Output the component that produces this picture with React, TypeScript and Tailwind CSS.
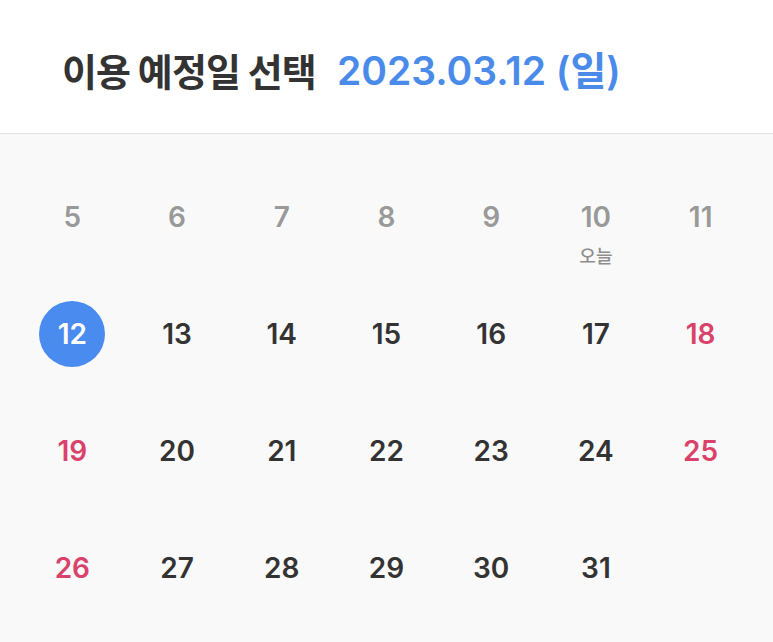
import React from "react";

type Day = { d: number | null; kind: "past" | "normal" | "red" | "selected"; today?: boolean };

const rows: Day[][] = [
  [5, 6, 7, 8, 9, 10, 11].map((d) => ({ d, kind: "past" as const, today: d === 10 })),
  [12, 13, 14, 15, 16, 17, 18].map((d) => ({
    d,
    kind: d === 12 ? ("selected" as const) : d === 18 ? ("red" as const) : ("normal" as const),
  })),
  [19, 20, 21, 22, 23, 24, 25].map((d) => ({
    d,
    kind: d === 19 || d === 25 ? ("red" as const) : ("normal" as const),
  })),
  [26, 27, 28, 29, 30, 31, null].map((d) => ({
    d,
    kind: d === 26 ? ("red" as const) : ("normal" as const),
  })),
];

const font = { fontFamily: "Inter, 'Noto Sans CJK KR', sans-serif" };
const kr = { fontFamily: "'Noto Sans CJK KR', sans-serif" };

export default function App() {
  return (
    <div className="w-[773px] h-[642px] bg-[#f9f9f9] overflow-hidden" style={font}>
      <div className="h-[134px] bg-white border-b border-[#e3e3e3] flex items-center pl-[62px] pt-[6px]">
        <span className="text-[38px] font-semibold text-[#333333] tracking-[-0.9px]" style={kr}>
          이용 예정일 선택
        </span>
        <span className="ml-[21px] text-[39px] font-semibold text-[#4a8bea] tracking-[0px]">
          2023.03.12 (<span style={kr}>일</span>)
        </span>
      </div>
      <div className="px-[20px] pt-[50px] flex flex-col">
        {rows.map((row, ri) => (
          <div key={ri} className="grid grid-cols-7 h-[117px]">
            {row.map((day, ci) => (
              <div key={ci} className="flex flex-col items-center">
                {day.d !== null && (
                  <div
                    className={
                      "w-[66px] h-[66px] rounded-full flex items-center justify-center text-[28px] font-semibold " +
                      (day.kind === "selected"
                        ? "bg-[#4a8bf0] text-white"
                        : day.kind === "past"
                        ? "text-[#999999]"
                        : day.kind === "red"
                        ? "text-[#d9436b]"
                        : "text-[#333333]")
                    }
                  >
                    {day.d}
                  </div>
                )}
                {day.today && (
                  <div className="mt-[-8px] text-[18px] text-[#8e8e8e] font-medium" style={kr}>
                    오늘
                  </div>
                )}
              </div>
            ))}
          </div>
        ))}
      </div>
    </div>
  );
}
